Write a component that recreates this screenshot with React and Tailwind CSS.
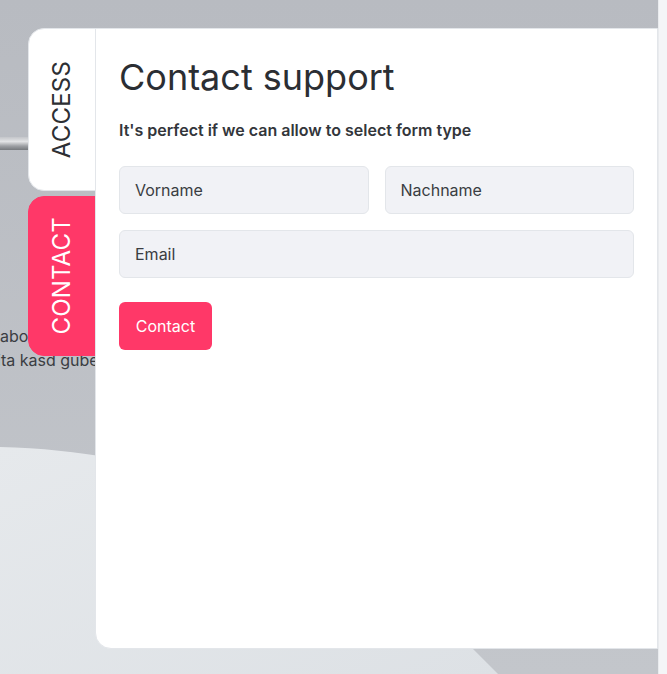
import React from 'react';

function Backdrop() {
  return (
    <svg className="absolute inset-0 h-full w-full" viewBox="0 0 658 674" preserveAspectRatio="none">
      <defs>
        <linearGradient id="bgGray" x1="0" y1="0" x2="0" y2="1">
          <stop offset="0" stopColor="#b8bbc1" />
          <stop offset="1" stopColor="#c3c6cb" />
        </linearGradient>
        <linearGradient id="bgLight" x1="0" y1="0" x2="1" y2="1">
          <stop offset="0" stopColor="#e6e9ec" />
          <stop offset="1" stopColor="#dde1e5" />
        </linearGradient>
        <linearGradient id="bar" x1="0" y1="0" x2="0" y2="1">
          <stop offset="0" stopColor="#c4c6ca" />
          <stop offset="0.35" stopColor="#e2e3e5" />
          <stop offset="0.7" stopColor="#9c9ea2" />
          <stop offset="1" stopColor="#76797d" />
        </linearGradient>
      </defs>
      <rect width="658" height="674" fill="url(#bgGray)" />
      <path d="M0 447 C 40 448 80 452 110 458 C 250 490 400 560 472 648 L 498 674 L 0 674 Z" fill="url(#bgLight)" />
      <rect x="0" y="137" width="40" height="13" fill="url(#bar)" />
    </svg>
  );
}

function Tab({ label, active, className }) {
  return (
    <div
      className={
        'flex items-center justify-center rounded-l-[16px] border ' +
        (active ? 'border-[#ff3868] bg-[#ff3868] text-white ' : 'border-[#e3e6ea] bg-white text-[#2d2f33] ') +
        className
      }
    >
      <span className="rotate-180 text-[24px] leading-none tracking-[0.2px] [writing-mode:vertical-rl]">{label}</span>
    </div>
  );
}

function Field({ placeholder, className }) {
  return (
    <div
      className={
        'flex h-[48px] items-center rounded-md border border-[#e3e6ea] bg-[#f1f2f6] px-[15px] text-base text-[#3a3d42] ' +
        className
      }
    >
      {placeholder}
    </div>
  );
}

export default function App() {
  return (
    <div className="flex h-[674px] w-[667px] overflow-hidden font-['Inter',sans-serif]">
      <div className="relative flex-1 overflow-hidden">
        <Backdrop />
        {/* page text behind the tabs */}
        <div className="absolute left-0 top-[324px] w-[96px] overflow-hidden whitespace-nowrap text-base leading-6 text-[#3a3d42]">
          <div>abore et</div>
          <div className="-ml-[3px]">ita kasd gube</div>
        </div>

        <div className="relative flex h-full pb-[25px] pl-[28px] pt-[28px]">
          <div className="flex w-[68px] shrink-0 flex-col gap-[5px]">
            <Tab label="ACCESS" className="h-[163px]" />
            <Tab label="CONTACT" active className="h-[160px]" />
          </div>

          <div className="-ml-px flex-1 rounded-bl-2xl border border-[#e3e6ea] bg-white pl-[23px] pr-[23px] pt-[28px]">
            <h1 className="text-4xl font-normal text-[#2b2e33]">Contact support</h1>
            <p className="mt-[21px] text-base font-semibold leading-6 text-[#33363b]">
              It's perfect if we can allow to select form type
            </p>
            <div className="mt-6 grid grid-cols-2 gap-4">
              <Field placeholder="Vorname" />
              <Field placeholder="Nachname" />
              <Field placeholder="Email" className="col-span-2" />
            </div>
            <button className="mt-6 h-[48px] w-[93px] rounded-md bg-[#ff3868] text-base text-white">Contact</button>
          </div>
        </div>
      </div>
      <div className="w-[9px] shrink-0 border-l border-[#e9ebee] bg-[#f4f5f7]" />
    </div>
  );
}
